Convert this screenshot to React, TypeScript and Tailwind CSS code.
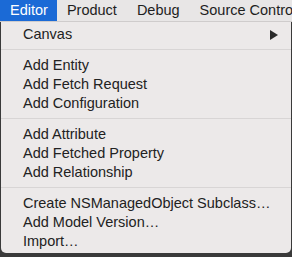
import React from "react";

const Item = ({ label, arrow }: { label: string; arrow?: boolean }) => (
  <div className="flex items-center justify-between h-[19px] pl-[22px] pr-[13px] text-[14.5px] text-[#222222] leading-none">
    <span>{label}</span>
    {arrow && (
      <svg width="8" height="10" viewBox="0 0 8 10">
        <path d="M0 0 L8 5 L0 10 Z" fill="#2a2a2a" />
      </svg>
    )}
  </div>
);

const Sep = () => (
  <div className="pt-[5px] pb-[6px]">
    <div className="h-px bg-[#d8d5d5]" />
  </div>
);

export default function App() {
  return (
    <div className="w-[292px] h-[257px] bg-[#3a3a3a] overflow-hidden" style={{ fontFamily: '"Liberation Sans", Arial, sans-serif' }}>
      <div className="flex h-[22px] bg-[#e8e6e6] border-b border-[#cfcccc] text-[14.5px] text-[#1e1e1e] items-stretch">
        <div className="bg-[#1b6ad6] text-white pl-[10px] pr-[9px] flex items-center">Editor</div>
        <div className="px-[10px] flex items-center">Product</div>
        <div className="px-[10px] flex items-center">Debug</div>
        <div className="px-[10px] flex items-center whitespace-nowrap">Source Control</div>
      </div>
      <div className="ml-px mr-px bg-[#ece9e9] rounded-b-[5px] pt-[3px] h-[231px]">
        <Item label="Canvas" arrow />
        <Sep />
        <Item label="Add Entity" />
        <Item label="Add Fetch Request" />
        <Item label="Add Configuration" />
        <Sep />
        <Item label="Add Attribute" />
        <Item label="Add Fetched Property" />
        <Item label="Add Relationship" />
        <Sep />
        <Item label="Create NSManagedObject Subclass…" />
        <Item label="Add Model Version…" />
        <Item label="Import…" />
      </div>
    </div>
  );
}
